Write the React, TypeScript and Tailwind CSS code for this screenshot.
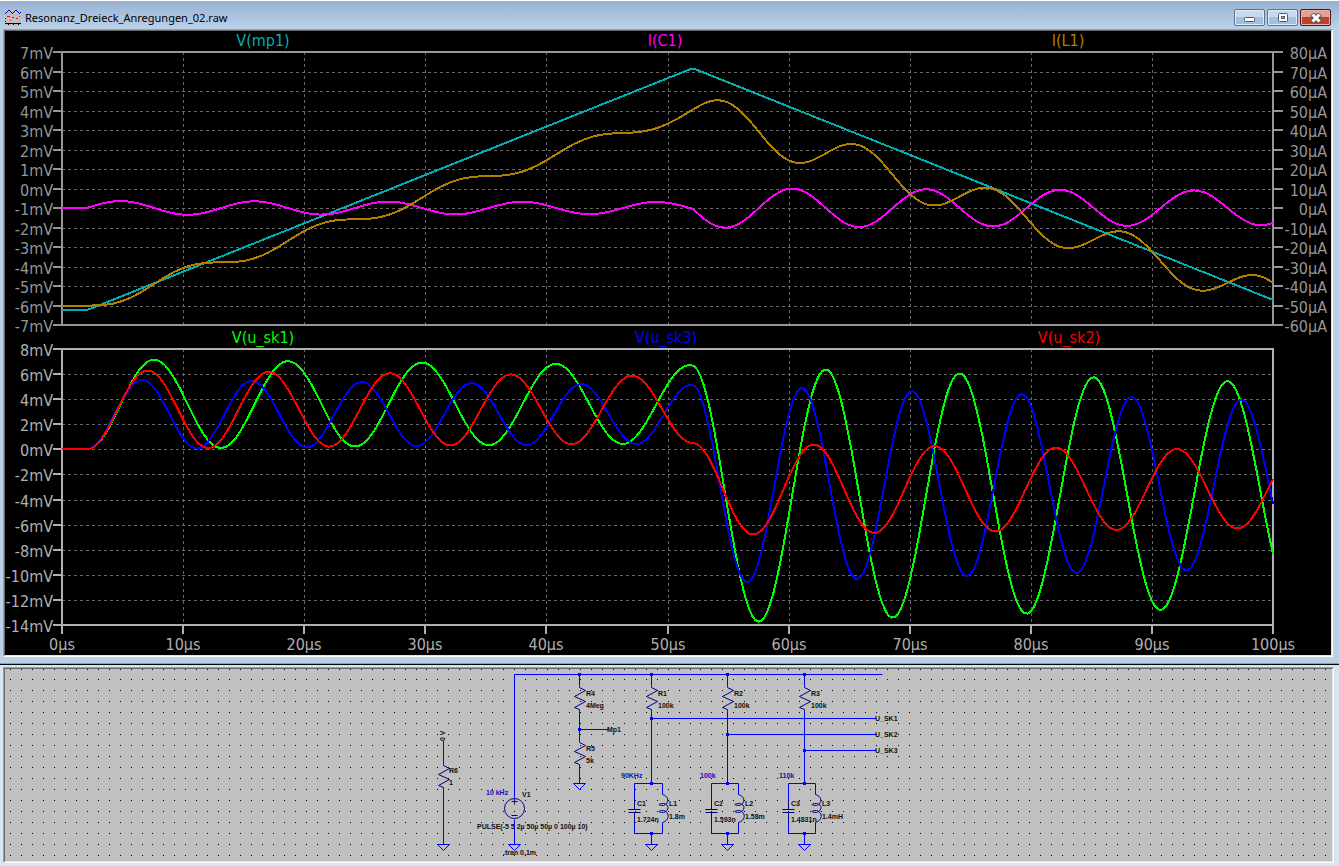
import React from "react"

const PLOT_LEFT = 62
const PLOT_RIGHT = 1273
const US = (PLOT_RIGHT - PLOT_LEFT) / 100

const TOP_Y = 52
const TOP_STEP = 273 / 14
const LOW_Y = 349
const LOW_STEP = 276 / 22

const DELAY = 2.08
const TURN = 52.08

const xAt = (t: number) => PLOT_LEFT + t * US
const yMilli = (v: number) => TOP_Y + (7 - v) * TOP_STEP
const yMicro = (i: number) => TOP_Y + ((80 - i) / 10) * TOP_STEP
const yLow = (v: number) => LOW_Y + (8 - v) * LOW_STEP

// response to a ramp that starts at the delay and turns round at TURN
const ramped = (f: (s: number) => number) => (t: number) => {
  let v = 0
  if (t > DELAY) v += f(t - DELAY)
  if (t > TURN) v -= 2 * f(t - TURN)
  return v
}

const tank = (amp: number, period: number, damp: number) =>
  ramped((s) => amp * (1 - Math.exp(-damp * s) * Math.cos((2 * Math.PI * s) / period)))

const W1 = (2 * Math.PI) / 11.06

const vMp1 = (t: number) => -6.23 + ramped((s) => 0.248 * s)(t)
const iC1 = ramped((s) => 3.55 * Math.exp(-0.0029 * s) * Math.sin(W1 * s))
const iL1 = (t: number) =>
  -50 + ramped((s) => 2 * (s - (Math.exp(-0.0029 * s) * Math.sin(W1 * s)) / W1))(t)

const uSk1 = tank(3.6, 11.06, 0.0029)
const uSk2 = tank(3.17, 10, 0.0035)
const uSk3 = tank(2.79, 9.07, 0.0035)

const trace = (f: (t: number) => number, y: (v: number) => number) => {
  const pts: string[] = []
  for (let t = 0; t <= 100.001; t += 0.25) {
    pts.push(`${xAt(t).toFixed(1)},${y(f(t)).toFixed(1)}`)
  }
  return pts.join(" ")
}

const range = (n: number) => Array.from({ length: n }, (_, i) => i)

const TOP_TRACES = [
  { name: "V(mp1)", x: 263, color: "#00b0b0", points: trace(vMp1, yMilli) },
  { name: "I(C1)", x: 665, color: "#ff00ff", points: trace(iC1, yMicro) },
  { name: "I(L1)", x: 1068, color: "#b08000", points: trace(iL1, yMicro) }
]

const LOW_TRACES = [
  { name: "V(u_sk1)", x: 263, color: "#00ff00", points: trace(uSk1, yLow) },
  { name: "V(u_sk3)", x: 666, color: "#0000ff", points: trace(uSk3, yLow) },
  { name: "V(u_sk2)", x: 1069, color: "#ff0000", points: trace(uSk2, yLow) }
]

function Grid({ top, bottom, rows }: { top: number; bottom: number; rows: number }) {

  const step = (bottom - top) / rows

  return (
    <g stroke="#666666" strokeWidth="1" strokeDasharray="3 3" shapeRendering="crispEdges">

      {range(rows - 1).map((i) => {
        const y = Math.round(top + (i + 1) * step) + 0.5
        return <line key={i} x1={PLOT_LEFT} x2={PLOT_RIGHT} y1={y} y2={y} />
      })}

      {range(9).map((i) => {
        const x = Math.round(xAt((i + 1) * 10)) + 0.5
        return <line key={i} x1={x} x2={x} y1={top} y2={bottom} />
      })}

    </g>
  )
}

function Plot() {

  return (
    <svg
      viewBox="5 31 1326 624"
      className="block w-full h-auto bg-black text-[16px] [font-family:'DejaVu_Sans_Condensed','Noto_Sans',sans-serif]"
    >

      {/* TOP PANE */}
      <Grid top={52} bottom={325} rows={14} />

      <g stroke="#969696" strokeWidth="2" fill="none" shapeRendering="crispEdges">
        <path d="M62 52H1273V325H62Z" />
        {range(15).map((i) => {
          const y = Math.round(TOP_Y + i * TOP_STEP)
          return <path key={i} d={`M53 ${y}H62M1273 ${y}H1283`} />
        })}
      </g>

      <g fill="#969696" textAnchor="end">
        {range(15).map((i) => {
          const y = Math.round(TOP_Y + i * TOP_STEP) + 7
          return (
            <React.Fragment key={i}>
              <text x="53" y={y}>{7 - i}mV</text>
              <text x="1327" y={y}>{80 - i * 10}µA</text>
            </React.Fragment>
          )
        })}
      </g>

      {TOP_TRACES.map((t) => (
        <g key={t.name}>
          <text x={t.x} y="46" fill={t.color} textAnchor="middle">{t.name}</text>
          <polyline points={t.points} fill="none" stroke={t.color} strokeWidth="2" shapeRendering="crispEdges" />
        </g>
      ))}

      {/* BOTTOM PANE */}
      <Grid top={349} bottom={625} rows={11} />

      <g stroke="#b0b0b0" strokeWidth="2" fill="none" shapeRendering="crispEdges">
        <path d="M62 349H1273V625H62Z" />
        {range(12).map((i) => (
          <path key={i} d={`M53 ${Math.round(LOW_Y + i * 2 * LOW_STEP)}H62`} />
        ))}
        {range(11).map((i) => (
          <path key={i} d={`M${Math.round(xAt(i * 10))} 625V634`} />
        ))}
      </g>

      <g fill="#b0b0b0">
        {range(12).map((i) => (
          <text key={i} x="53" y={Math.round(LOW_Y + i * 2 * LOW_STEP) + 7} textAnchor="end">
            {8 - i * 2}mV
          </text>
        ))}
        {range(11).map((i) => (
          <text key={i} x={Math.round(xAt(i * 10))} y="650" textAnchor="middle">
            {i * 10}µs
          </text>
        ))}
      </g>

      {LOW_TRACES.map((t) => (
        <g key={t.name}>
          <text x={t.x} y="343" fill={t.color} textAnchor="middle">{t.name}</text>
          <polyline points={t.points} fill="none" stroke={t.color} strokeWidth="2" shapeRendering="crispEdges" />
        </g>
      ))}

    </svg>
  )
}

function Resistor({ x, y }: { x: number; y: number }) {
  return (
    <path
      d={`M${x} ${y}V${y + 1}L${x + 6} ${y + 4}L${x - 5} ${y + 10}L${x + 6} ${y + 15}L${x - 5} ${y + 21}L${x} ${y + 23}V${y + 25}`}
      stroke="#000080"
    />
  )
}

function Ground({ x, y }: { x: number; y: number }) {
  return <path d={`M${x - 6} ${y}H${x + 6}L${x} ${y + 6}Z`} />
}

function Node({ x, y }: { x: number; y: number }) {
  return <rect x={x - 1} y={y - 1} width="2" height="2" fill="#0000ff" />
}

const TANKS = [
  { x: 651, c: 634, l: 662, tap: 718, n: 1, freq: "90KHz", fx: 621, cap: "1.724n", ind: "1.8m" },
  { x: 727, c: 711, l: 738, tap: 734, n: 2, freq: "100k", fx: 700, cap: "1.593n", ind: "1.58m" },
  { x: 804, c: 788, l: 815, tap: 750, n: 3, freq: "110k", fx: 779, cap: "1.4831n", ind: "1.4mH" }
]

function Schematic() {

  return (
    <svg
      viewBox="5 669 1327 192"
      className="block w-full h-auto bg-[#c0c0c0] text-[7px] font-bold [font-family:'Liberation_Sans',Arial,sans-serif]"
    >

      {/* SNAP GRID */}
      <g fill="#000000" shapeRendering="crispEdges">
        {range(18).map((r) =>
          range(121).map((c) => (
            <rect
              key={`${r}-${c}`}
              x={Math.round(10 + c * 10.96)}
              y={r === 0 ? 669 : 668 + r * 11}
              width="1"
              height="1"
            />
          ))
        )}
      </g>

      {/* WIRES AND SYMBOLS */}
      <g stroke="#0000ff" strokeWidth="1" fill="none" transform="translate(0.5 0.5)">

        <path d="M514 797V674H882" />
        <path d="M514 819V844" />
        <Ground x={514} y={844} />
        <g stroke="#000080">
          <circle cx="514" cy="808" r="10" />
          <path d="M514 797V804M511 801H517M511 815H517" />
        </g>

        <path d="M443 740V764M443 789V844" />
        <Resistor x={443} y={764} />
        <Ground x={443} y={844} />

        <path d="M579 674V686M579 711V741M579 729H608M579 766V783" />
        <Resistor x={579} y={686} />
        <Resistor x={579} y={741} />
        <Node x={579} y={674} />
        <Node x={579} y={729} />
        <Ground x={579} y={783} />

        {TANKS.map((k) => (
          <g key={k.n}>
            <path d={`M${k.x} 674V686M${k.x} 711V783M${k.x} ${k.tap}H876M${k.x} 833V844`} />
            <path d={`M${k.c} 808V783H${k.l}V794M${k.c} 813V833H${k.l}V822`} />
            <Resistor x={k.x} y={686} />
            <g stroke="#000080">
              <path d={`M${k.c} 799V809H${k.c - 6}H${k.c + 6}M${k.c - 6} 812H${k.c + 6}M${k.c} 812V822`} />
              <path
                d={`M${k.l} 794c7 2 7 9 1 11c-6 0 -6 -2 0 -2c6 1 6 7 0 9c-6 0 -6 -2 0 -2c7 2 6 10 -1 12`}
              />
            </g>
            <Node x={k.x} y={674} />
            <Node x={k.x} y={k.tap} />
            <Node x={k.x} y={783} />
            <Node x={k.x} y={833} />
            <Ground x={k.x} y={844} />
          </g>
        ))}

      </g>

      {/* LABELS */}
      <g fill="#101010">
        <text x="586" y="696">R4</text>
        <text x="586" y="708">4Meg</text>
        <text x="607" y="732">Mp1</text>
        <text x="586" y="751">R5</text>
        <text x="586" y="763">5k</text>
        <text x="449" y="773">R6</text>
        <text x="449" y="785">1</text>
        <text transform="translate(445 741) rotate(-90)">0 V</text>
        <text x="522" y="797">V1</text>
        <text x="477" y="829">PULSE(-5 5 2µ 50µ 50µ 0 100µ 10)</text>
        <text x="503" y="855">.tran 0,1m</text>

        {TANKS.map((k) => (
          <g key={k.n}>
            <text x={k.x + 7} y="696">R{k.n}</text>
            <text x={k.x + 7} y="708">100k</text>
            <text x="875" y={k.tap + 3}>U_SK{k.n}</text>
            <text x={k.c + 3} y="806">C{k.n}</text>
            <text x={k.c + 3} y="822">{k.cap}</text>
            <text x={k.l + 7} y="806">L{k.n}</text>
            <text x={k.l + 7} y="819">{k.ind}</text>
          </g>
        ))}
      </g>

      <g fill="#1010c0">
        <text x="486" y="795">10 kHz</text>
        {TANKS.map((k) => (
          <text key={k.n} x={k.fx} y="778">{k.freq}</text>
        ))}
      </g>

    </svg>
  )
}

function TitleIcon() {
  return (
    <svg width="16" height="16" viewBox="0 0 16 16" shapeRendering="crispEdges">
      <rect width="16" height="16" fill="#c0c0c0" />
      <path
        d="M0 3h1v1h-1zM1 2h1v1h-1zM2 1h1v1h-1zM3 0h2v1h-2zM5 1h1v1h-1zM6 2h1v1h-1zM7 3h1v1h-1zM8 2h1v1h-1zM9 1h1v1h-1zM10 0h2v1h-2zM12 1h1v1h-1zM13 2h1v1h-1zM14 3h1v1h-1zM15 2h1v1h-1z"
        fill="#0000e0"
      />
      <path d="M2 6h3v1h-3zM7 7h2v1h-2zM11 8h2v1h-2zM5 10h1v1h-1zM14 6h1v1h-1z" fill="#ff0000" />
      <path d="M0 13h16v1h-16zM3 14h1v1h-1zM8 14h1v1h-1zM13 14h1v1h-1zM0 8h1v1h-1zM0 11h1v1h-1z" fill="#000000" />
    </svg>
  )
}

const BUTTON =
  "w-[31px] h-[17px] rounded-[2px] border border-[#5d7290] bg-linear-to-b from-[#c6d9ee] from-50% to-[#a5bfdd] to-50% shadow-[inset_0_0_0_1px_#dfebf7] flex items-center justify-center"

function TitleBar() {

  return (
    <div className="h-[29px] border-t border-white bg-linear-to-b from-[#97b2d1] to-[#bad1ea] flex items-center justify-between pl-[5px] pr-2 pt-[5px]">

      <div className="flex items-center gap-1">
        <TitleIcon />
        <h1 className="text-[11px] leading-4 text-black whitespace-nowrap [font-family:'Noto_Sans','Open_Sans',sans-serif]">
          Resonanz_Dreieck_Anregungen_02.raw
        </h1>
      </div>

      <div className="flex gap-[2px]">

        <button aria-label="Minimize" className={BUTTON}>
          <svg width="12" height="9" viewBox="0 0 12 9">
            <rect x="0.5" y="4.5" width="10" height="4" rx="1" fill="#ffffff" stroke="#50586a" />
          </svg>
        </button>

        <button aria-label="Maximize" className={BUTTON}>
          <svg width="12" height="9" viewBox="0 0 12 9">
            <rect x="1.5" y="0.5" width="9" height="8" rx="1" fill="#ffffff" stroke="#50586a" />
            <rect x="4.5" y="3.5" width="3" height="2" fill="#a9c1dc" stroke="#50586a" />
          </svg>
        </button>

        <button
          aria-label="Close"
          className="w-[31px] h-[17px] rounded-[2px] border border-[#4c1720] bg-linear-to-b from-[#e3a193] from-50% to-[#bd4229] to-50% shadow-[inset_0_0_0_1px_#e8b0a4] flex items-center justify-center"
        >
          <svg width="12" height="10" viewBox="0 0 12 10">
            <path d="M2 1L10 9M10 1L2 9" stroke="#50586a" strokeWidth="5" />
            <path d="M2.5 1.5L9.5 8.5M9.5 1.5L2.5 8.5" stroke="#ffffff" strokeWidth="3" />
          </svg>
        </button>

      </div>

    </div>
  )
}

const SUNKEN_OUTER = "border border-t-[#a0a0a0] border-l-[#a0a0a0] border-r-white border-b-white"
const SUNKEN_INNER = "border border-t-[#696969] border-l-[#696969] border-r-[#e3e3e3] border-b-[#e3e3e3]"

function App() {

  return (
    <main className="bg-[#d7e4f2]">

      {/* WAVEFORM WINDOW */}
      <section className="bg-[#bad1ea] border-b border-[#2fc4d8]">

        <TitleBar />

        <div className="pl-[3px] pr-[6px] pb-[6px]">
          <div className={SUNKEN_OUTER}>
            <div className={SUNKEN_INNER}>
              <Plot />
            </div>
          </div>
        </div>

      </section>

      {/* SCHEMATIC WINDOW */}
      <section className="border-t border-black pt-[2px] pl-[3px] pr-[5px] pb-[3px]">
        <div className={SUNKEN_OUTER}>
          <div className={SUNKEN_INNER}>
            <Schematic />
          </div>
        </div>
      </section>

    </main>
  )
}

export default App
